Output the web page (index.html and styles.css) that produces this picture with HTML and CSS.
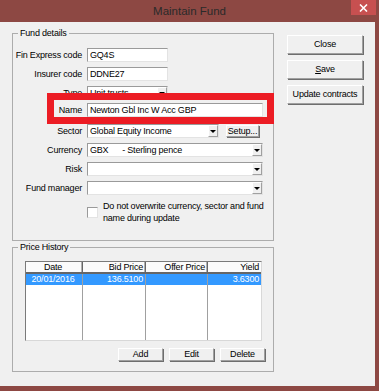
FILE: index.html
```html
<!DOCTYPE html>
<html>
<head>
<meta charset="utf-8">
<title>Maintain Fund</title>
<link rel="stylesheet" href="styles.css">
</head>
<body>
<div class="window">
  <div class="titlebar">
    <span class="spacer"></span>
    <span class="title">Maintain Fund</span>
    <span class="close-x">
      <svg width="9" height="8" viewBox="0 0 9 8"><path d="M1 0.5 L8 7.5 M8 0.5 L1 7.5" stroke="#fff" stroke-width="1.6" fill="none"/></svg>
    </span>
  </div>
  <div class="client">
    <div class="left">
      <fieldset class="group details">
        <legend>Fund details</legend>
        <div class="form">
          <label>Fin Express code</label>
          <div class="box w-short"><span class="val">GQ4S</span></div>
          <label>Insurer code</label>
          <div class="box w-short"><span class="val">DDNE27</span></div>
          <label>Type</label>
          <div class="box combo w-short"><span class="val">Unit trusts</span><span class="drop"></span></div>
          <label class="up">Name</label>
          <div class="box w-long up"><span class="val">Newton Gbl Inc W Acc GBP</span></div>
          <label>Sector</label>
          <div class="sector-row">
            <div class="box combo w-mid"><span class="val">Global Equity Income</span><span class="drop"></span></div>
            <button class="btn setup">Setup...</button>
          </div>
          <label>Currency</label>
          <div class="box combo w-long"><span class="val pre">GBX      - Sterling pence</span><span class="drop"></span></div>
          <label>Risk</label>
          <div class="box combo w-long"><span class="val"></span><span class="drop"></span></div>
          <label>Fund manager</label>
          <div class="box combo w-long"><span class="val"></span><span class="drop"></span></div>
          <div class="check-row">
            <span class="checkbox"></span>
            <span class="check-text">Do not overwrite currency, sector and fund<br>name during update</span>
          </div>
        </div>
      </fieldset>
      <fieldset class="group history">
        <legend>Price History</legend>
        <div class="history-inner">
          <div class="list">
            <div class="hd center">Date</div>
            <div class="hd">Bid Price</div>
            <div class="hd">Offer Price</div>
            <div class="hd last">Yield</div>
            <div class="cell sel center">20/01/2016</div>
            <div class="cell sel">136.5100</div>
            <div class="cell sel"></div>
            <div class="cell sel last">3.6300</div>
            <div class="cell fill"></div>
            <div class="cell fill"></div>
            <div class="cell fill"></div>
            <div class="cell fill last"></div>
          </div>
          <div class="btn-row">
            <button class="btn small">Add</button>
            <button class="btn small">Edit</button>
            <button class="btn small">Delete</button>
          </div>
        </div>
      </fieldset>
    </div>
    <div class="actions">
      <button class="btn big">Close</button>
      <button class="btn big"><u>S</u>ave</button>
      <button class="btn big">Update contracts</button>
    </div>
  </div>
  <div class="highlight"></div>
</div>
</body>
</html>
```
FILE: styles.css
```css
html, body {
  margin: 0;
  padding: 0;
}
body {
  background: #8d4843;
  font-family: "Liberation Sans", Arial, sans-serif;
  font-size: 9px;
  letter-spacing: -0.2px;
  color: #000;
}
.window {
  position: relative;
  width: 379px;
  height: 391px;
  display: flex;
  flex-direction: column;
}
.titlebar {
  height: 22px;
  display: grid;
  grid-template-columns: 1fr auto 1fr;
  align-items: start;
}
.title {
  font-size: 11.5px;
  letter-spacing: 0;
  line-height: 22px;
  color: #2a2a2a;
}
.close-x {
  justify-self: end;
  width: 25px;
  height: 15px;
  margin-right: 3px;
  background: #c75050;
  display: flex;
  align-items: center;
  justify-content: center;
}
.client {
  flex: 1;
  margin: 0 4px 5px 0;
  background: #f0f0f0;
  display: flex;
  padding: 5px 0 0 12px;
}
.left {
  width: 262px;
  display: flex;
  flex-direction: column;
}
fieldset.group {
  margin: 0;
  padding: 0;
  border: 1px solid #acacac;
  min-width: 0;
}
legend {
  margin-left: 5px;
  padding: 0 2px;
  line-height: 12px;
}
.form {
  display: grid;
  grid-template-columns: 69px auto;
  grid-template-rows: repeat(8, 14px) auto;
  column-gap: 5px;
  row-gap: 5px;
  padding: 9px 0 16px;
  align-items: center;
}
.form label {
  justify-self: end;
  white-space: nowrap;
  line-height: 14px;
}
.form .up {
  align-self: start;
  margin-top: -2px;
}
.box {
  box-sizing: border-box;
  height: 14px;
  background: #fff;
  border: 1px solid;
  border-color: #9a9a9a #e3e3e3 #e3e3e3 #9a9a9a;
  display: flex;
  align-items: stretch;
}
.val {
  flex: 1;
  padding-left: 2px;
  line-height: 12px;
  white-space: nowrap;
  overflow: hidden;
}
.pre {
  white-space: pre;
}
.w-short { width: 81px; }
.w-mid { width: 132px; }
.w-long { width: 176px; }
.drop {
  width: 10px;
  background: #f0f0f0;
  box-sizing: border-box;
  border: 1px solid;
  border-color: #fff #a0a0a0 #a0a0a0 #fff;
  display: flex;
  align-items: center;
  justify-content: center;
}
.drop::after {
  content: "";
  border-left: 3px solid transparent;
  border-right: 3px solid transparent;
  border-top: 3px solid #000;
}
.sector-row {
  display: flex;
  align-items: center;
  gap: 7px;
}
.btn {
  box-sizing: border-box;
  font-family: inherit;
  font-size: 9px;
  letter-spacing: -0.2px;
  color: #000;
  background: #f0f0f0;
  border: 1px solid;
  border-color: #fff #a0a0a0 #a0a0a0 #fff;
  box-shadow: 1px 1px 0 #6e6e6e;
  padding: 0;
  margin: 0;
  line-height: 1;
  white-space: nowrap;
}
.setup {
  width: 33px;
  height: 12px;
}
.check-row {
  grid-column: 2;
  display: flex;
  align-items: center;
  gap: 5px;
}
.checkbox {
  width: 11px;
  height: 11px;
  box-sizing: border-box;
  background: #fff;
  border: 1px solid;
  border-color: #9a9a9a #e3e3e3 #e3e3e3 #9a9a9a;
}
.check-text {
  line-height: 12px;
  white-space: nowrap;
}
.history {
  margin-top: 6px;
}
.history-inner {
  padding: 8px 10px 10px 12px;
}
.list {
  box-sizing: border-box;
  width: 237px;
  height: 80px;
  background: #fff;
  border: 1px solid;
  border-color: #7a7a7a #d8d8d8 #d8d8d8 #7a7a7a;
  display: grid;
  grid-template-columns: 57px 63px 62px 1fr;
  grid-template-rows: 12px 11px 1fr;
}
.hd {
  box-sizing: border-box;
  background: #fbfbfb;
  border-right: 1px solid #666;
  box-shadow: inset -1px 0 0 #b0b0b0;
  border-bottom: 2px solid #666;
  text-align: right;
  padding-right: 2px;
  line-height: 10px;
}
.cell {
  box-sizing: border-box;
  border-right: 1px solid #a0a0a0;
  text-align: right;
  padding-right: 2px;
  line-height: 11px;
}
.center {
  text-align: center;
}
.hd.last, .cell.last {
  border-right: none;
  box-shadow: none;
}
.sel {
  background: #3399ff;
  color: #fff;
}
.btn-row {
  display: flex;
  justify-content: flex-end;
  gap: 6px;
  margin-top: 7px;
  margin-right: -2px;
}
.small {
  width: 45px;
  height: 13px;
}
.actions {
  margin-left: 13px;
  padding-top: 8px;
  display: flex;
  flex-direction: column;
  gap: 6px;
}
.big {
  width: 76px;
  height: 19px;
}
.highlight {
  position: absolute;
  left: 47px;
  top: 93px;
  width: 227px;
  height: 31px;
  box-sizing: border-box;
  border: 7px solid #ec1c24;
}
```
